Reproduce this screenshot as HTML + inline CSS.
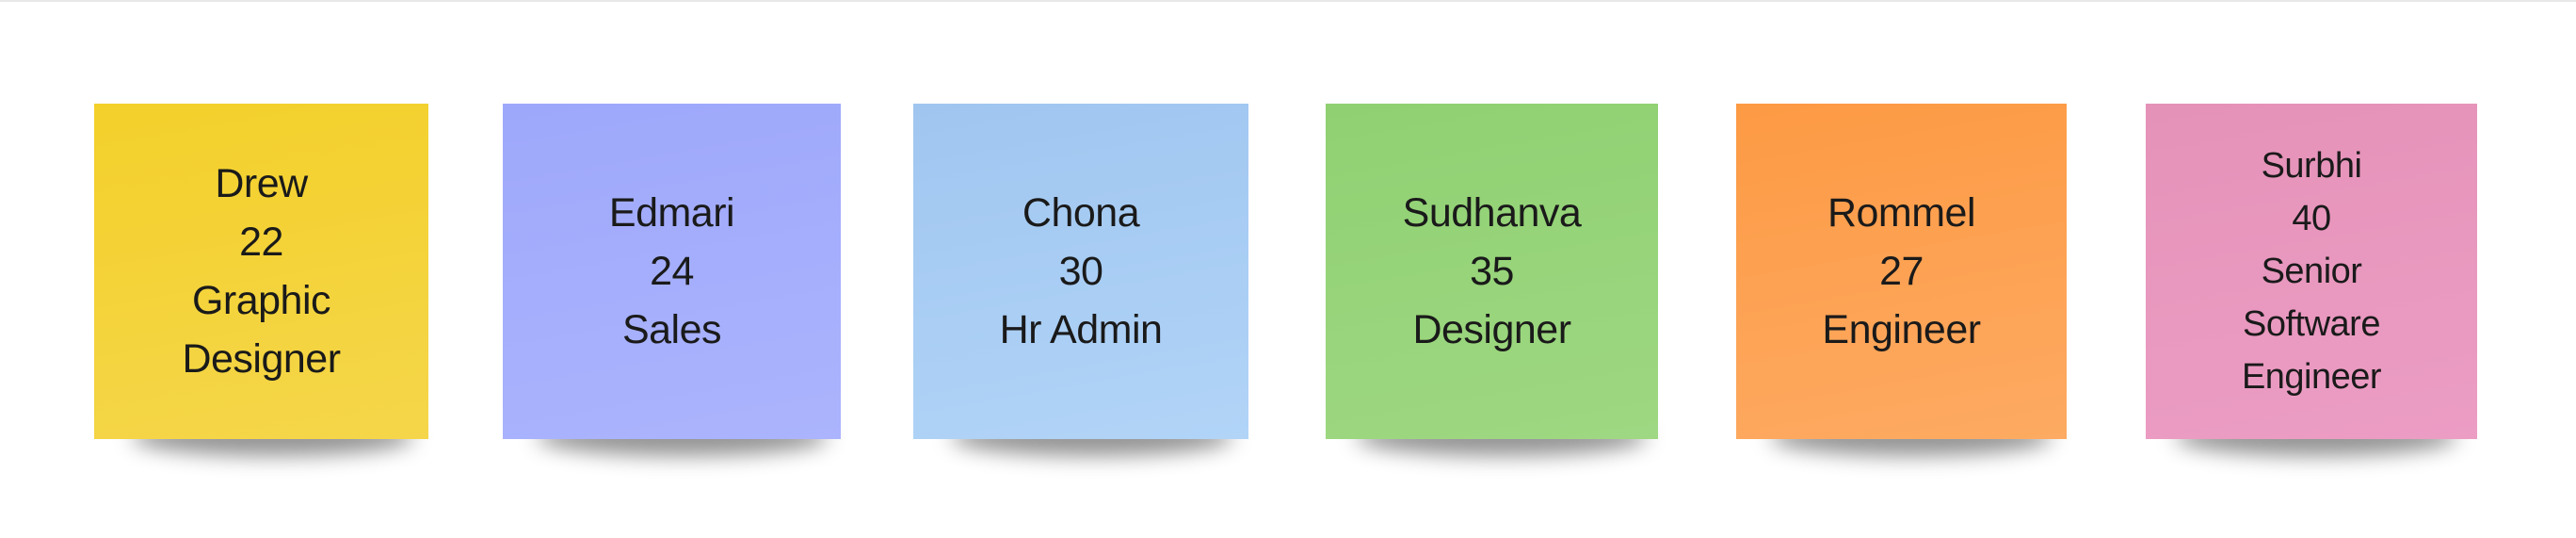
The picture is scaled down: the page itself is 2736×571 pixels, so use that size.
<!DOCTYPE html>
<html><head><style>
body{margin:0;width:2736px;height:571px;background:#fff;position:relative;overflow:hidden;font-family:"Liberation Sans",sans-serif;}
.top{position:absolute;left:0;top:0;width:2736px;height:2px;background:#e8e8e8;}
.n{position:absolute;top:110px;height:356px;display:flex;flex-direction:column;justify-content:center;align-items:center;text-align:center;color:#1a1a1a;font-size:43px;line-height:62px;letter-spacing:-0.5px;}
.sh{position:absolute;top:420px;height:40px;border-radius:50%;box-shadow:0 24px 22px rgba(0,0,0,0.42);}
.s{font-size:38px;line-height:56px;}
</style></head><body>
<div class="top"></div>
<div class="sh" style="left:140px;width:300px"></div>
<div class="sh" style="left:570px;width:310px"></div>
<div class="sh" style="left:1010px;width:300px"></div>
<div class="sh" style="left:1440px;width:310px"></div>
<div class="sh" style="left:1880px;width:300px"></div>
<div class="sh" style="left:2310px;width:300px"></div>
<div class="n" style="left:100px;width:355px;background:linear-gradient(170deg,#f3d02a,#f5d64a)">Drew<br>22<br>Graphic<br>Designer</div>
<div class="n" style="left:534px;width:359px;background:linear-gradient(170deg,#9ea8fb,#abb4fc)">Edmari<br>24<br>Sales</div>
<div class="n" style="left:970px;width:356px;background:linear-gradient(170deg,#a0c6f0,#b1d4f7)">Chona<br>30<br>Hr Admin</div>
<div class="n" style="left:1408px;width:353px;background:linear-gradient(170deg,#90d072,#9ed882)">Sudhanva<br>35<br>Designer</div>
<div class="n" style="left:1844px;width:351px;background:linear-gradient(170deg,#fd9a44,#fdaa62)">Rommel<br>27<br>Engineer</div>
<div class="n s" style="left:2279px;width:352px;background:linear-gradient(170deg,#e592b8,#ec9dc4)">Surbhi<br>40<br>Senior<br>Software<br>Engineer</div>
</body></html>
